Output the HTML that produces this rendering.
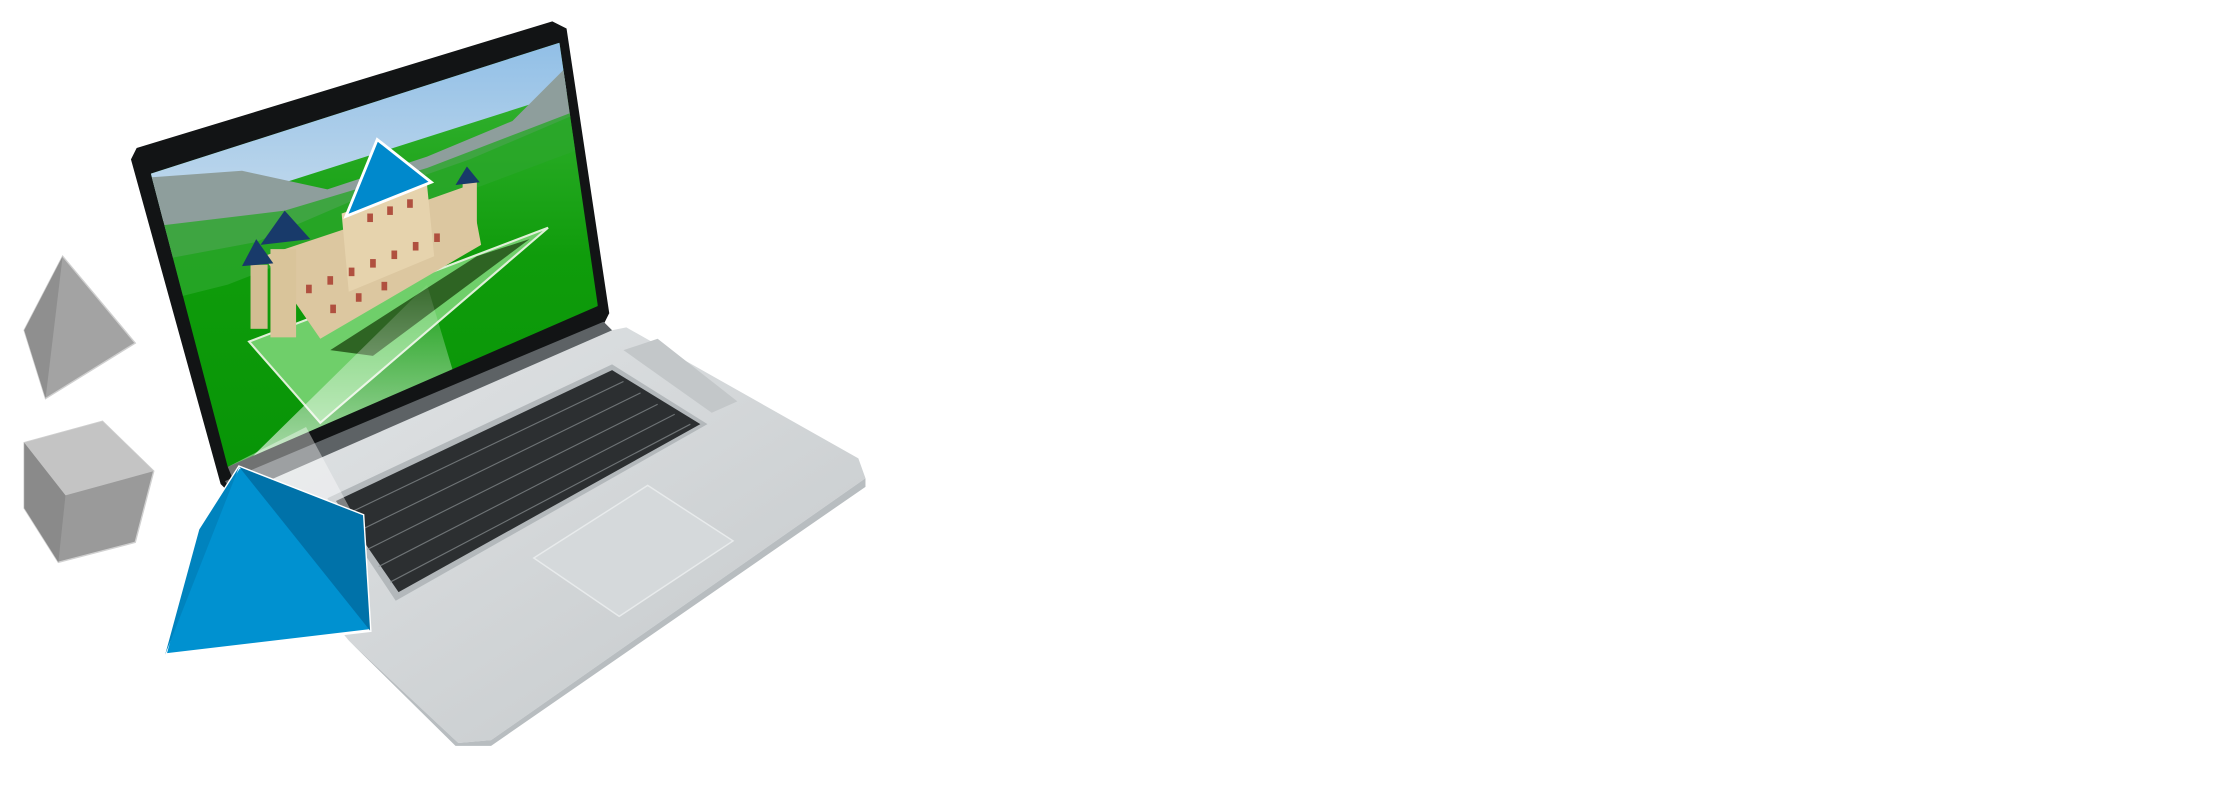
<!DOCTYPE html>
<html><head><meta charset="utf-8"><style>html,body{margin:0;padding:0;background:#fff;overflow:hidden;width:2232px;height:792px}svg{display:block}</style></head>
<body>
<svg width="2232" height="792" viewBox="0 0 1568 556.4" preserveAspectRatio="none" xmlns="http://www.w3.org/2000/svg">
<defs>
<linearGradient id="sky" x1="0" y1="0" x2="0" y2="1"><stop offset="0" stop-color="#8dbde6"/><stop offset="1" stop-color="#c7dced"/></linearGradient>
<linearGradient id="base" x1="0" y1="0" x2="1" y2="1"><stop offset="0" stop-color="#e2e5e7"/><stop offset="1" stop-color="#c4c8ca"/></linearGradient>
<linearGradient id="grass" x1="0" y1="0" x2="0" y2="1"><stop offset="0" stop-color="#3fb83c"/><stop offset="0.5" stop-color="#0f9c0b"/><stop offset="1" stop-color="#079406"/></linearGradient>
<linearGradient id="beam" x1="0" y1="1" x2="0" y2="0"><stop offset="0" stop-color="#fff" stop-opacity="0.75"/><stop offset="1" stop-color="#fff" stop-opacity="0.05"/></linearGradient>
<clipPath id="scr"><polygon points="106,122 393,30 420,215 160,328"/></clipPath>
</defs>
<!-- base -->
<polygon points="160,345 410,236 440,230 603,322 608,336 345,520 322,522 245,450" fill="url(#base)"/>
<polygon points="245,450 322,522 345,520 608,336 608,342 345,524 320,524" fill="#b8bdc0"/>
<polygon points="230,350 430,256 497,298 278,422" fill="#b3b8bb"/>
<polygon points="236,352 430,260 492,298 280,416" fill="#2c2f31"/>
<g stroke="#8a9093" stroke-width="0.8" opacity="0.7">
<line x1="242" y1="362" x2="438" y2="268"/><line x1="250" y1="374" x2="450" y2="276"/><line x1="258" y1="386" x2="462" y2="284"/><line x1="266" y1="398" x2="474" y2="291"/><line x1="274" y1="409" x2="485" y2="298"/>
</g>
<polygon points="438,246 462,238 518,282 500,290" fill="#c3c7c9"/>
<polygon points="375,392 455,341 515,380 435,433" fill="#d5d9db" stroke="#e8ebec"/>
<!-- lid -->
<polygon points="92,112 96,104 388,15 398,20 428,220 424,228 160,345 155,340" fill="#121415"/>
<polygon points="158,338 424,226 430,232 165,348" fill="#5d6265"/>
<g clip-path="url(#scr)">
<rect x="100" y="20" width="330" height="320" fill="url(#grass)"/>
<polygon points="100,20 430,20 430,55 100,160" fill="url(#sky)"/>
<polygon points="100,125 170,120 230,133 300,110 360,85 400,45 405,80 330,112 250,140 180,170 100,185" fill="#8e9e9c"/>
<polygon points="100,160 200,148 300,118 420,72 420,100 300,145 160,200 100,215" fill="#2aa62a" opacity="0.8"/>
<polygon points="175,240 385,160 225,297" fill="#6fcf6a" stroke="#e0f0d8" stroke-width="1.5"/>
<polygon points="232,246 335,180 372,168 262,250" fill="#2e6423"/>
<polygon points="185,180 245,160 330,130 338,172 225,238" fill="#dcc7a0"/>
<polygon points="240,150 300,130 305,180 245,205" fill="#e6d3ad"/>
<rect x="190" y="175" width="18" height="62" fill="#d9c49a"/>
<rect x="176" y="186" width="12" height="45" fill="#d2bd92"/>
<rect x="325" y="128" width="10" height="45" fill="#dcc7a0"/>
<g fill="#b0503f"><rect x="215" y="200" width="4" height="6"/><rect x="230" y="194" width="4" height="6"/><rect x="245" y="188" width="4" height="6"/><rect x="260" y="182" width="4" height="6"/><rect x="275" y="176" width="4" height="6"/><rect x="290" y="170" width="4" height="6"/><rect x="305" y="164" width="4" height="6"/><rect x="258" y="150" width="4" height="6"/><rect x="272" y="145" width="4" height="6"/><rect x="286" y="140" width="4" height="6"/><rect x="232" y="214" width="4" height="6"/><rect x="250" y="206" width="4" height="6"/><rect x="268" y="198" width="4" height="6"/></g>
<polygon points="243,152 265,98 303,128" fill="#0089cc" stroke="#fff" stroke-width="2"/>
<polygon points="183,172 200,148 218,168" fill="#183a6a"/><polygon points="170,187 180,168 192,185" fill="#183a6a"/><polygon points="320,130 328,117 337,128" fill="#183a6a"/>
<polygon points="140,340 170,328 300,200 330,300" fill="url(#beam)"/>
</g>
<polygon points="160,328 215,300 250,365 165,340" fill="#fff" opacity="0.4"/>
<!-- grey pyramid -->
<polygon points="17,232 44,180 95,241 32,280" fill="#a3a3a3" stroke="#cfcfcf"/>
<polygon points="17,232 44,180 32,280" fill="#8f8f8f"/>
<!-- cube -->
<polygon points="17,311 72,296 108,331 95,381 41,395 17,357" fill="#9a9a9a" stroke="#d0d0d0"/>
<polygon points="17,311 72,296 108,331 46,348" fill="#c4c4c4"/>
<polygon points="17,311 46,348 41,395 17,357" fill="#8a8a8a"/>
<!-- blue pyramid -->
<polygon points="116,460 140,372 168,328 255,362 260,443" fill="#0091d0" stroke="#fff" stroke-width="2"/>
<polygon points="168,328 255,362 260,443" fill="#0072a9"/>
<polygon points="116,460 140,372 168,328" fill="#0083be"/>
</svg>
</body></html>
